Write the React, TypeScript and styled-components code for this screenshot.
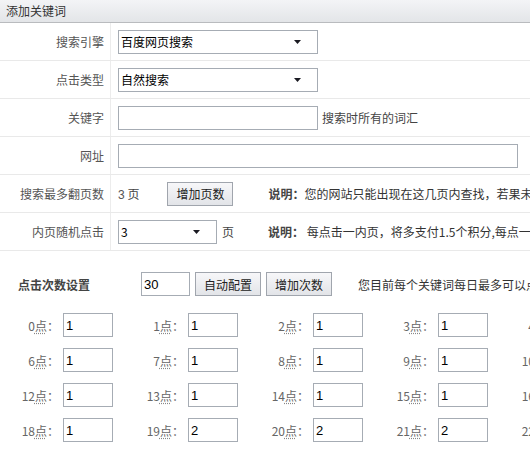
import React from 'react';
import styled, { createGlobalStyle } from 'styled-components';

const GlobalStyle = createGlobalStyle`
  html, body {
    margin: 0;
    padding: 0;
    background: #fff;
    overflow: hidden;
  }
  body {
    width: 530px;
    height: 450px;
    font-family: "Noto Sans CJK SC", "Liberation Sans", sans-serif;
    font-size: 12px;
    color: #333;
  }
`;

const hours = Array.from({ length: 24 }, (_, i) => ({
  hour: i,
  value: i >= 19 ? 2 : 1,
}));

const App = () => {
  return (
    <Page>
      <GlobalStyle />
      <TitleBar>添加关键词</TitleBar>
      <Form>
        <Row>
          <Label>搜索引擎</Label>
          <Field>
            <SelectBox width={200}>
              <span>百度网页搜索</span>
              <Arrow />
            </SelectBox>
          </Field>
        </Row>
        <Row>
          <Label>点击类型</Label>
          <Field>
            <SelectBox width={200}>
              <span>自然搜索</span>
              <Arrow />
            </SelectBox>
          </Field>
        </Row>
        <Row>
          <Label>关键字</Label>
          <Field>
            <TextInput width={200} defaultValue="" />
            <Hint>搜索时所有的词汇</Hint>
          </Field>
        </Row>
        <Row>
          <Label>网址</Label>
          <Field>
            <TextInput width={400} defaultValue="" />
          </Field>
        </Row>
        <Row>
          <Label>搜索最多翻页数</Label>
          <Field>
            <Plain><Num>3</Num> 页</Plain>
            <Button gap={28}>增加页数</Button>
            <Note gap={35}><b>说明：</b>您的网站只能出现在这几页内查找，若果未找到则不点击</Note>
          </Field>
        </Row>
        <Row>
          <Label>内页随机点击</Label>
          <Field>
            <SelectBox width={99}>
              <span>3</span>
              <Arrow />
            </SelectBox>
            <Plain gap={5}>页</Plain>
            <Note gap={34}><b>说明：</b> 每点击一内页，将多支付1.5个积分,每点一次</Note>
          </Field>
        </Row>
      </Form>
      <CountBar>
        <CountTitle>点击次数设置</CountTitle>
        <TextInput width={49} defaultValue="30" />
        <Button gap={5}>自动配置</Button>
        <Button gap={5}>增加次数</Button>
        <Note gap={26}>您目前每个关键词每日最多可以点击30次</Note>
      </CountBar>
      <HourGrid>
        {hours.map((h) => (
          <HourCell key={h.hour}>
            <HourLabel>
              {h.hour}<Dotted>点</Dotted>：
            </HourLabel>
            <TextInput width={50} defaultValue={String(h.value)} />
          </HourCell>
        ))}
      </HourGrid>
    </Page>
  );
};

export default App;

const Arrow = () => (
  <ArrowIcon width="8" height="4" viewBox="0 0 8 4">
    <path d="M0 0h7L3.5 4z" fill="#1a1a22" />
  </ArrowIcon>
);

const Page = styled.div`
  width: 530px;
  height: 450px;
  overflow: hidden;
`;

const TitleBar = styled.div`
  height: 22px;
  line-height: 22px;
  padding-left: 6px;
  background: linear-gradient(#f3f4f6, #e3e5e8);
  border-bottom: 1px solid #b9bbbe;
  color: #333;
  font-size: 12px;
`;

const Form = styled.div`
  display: flex;
  flex-direction: column;
`;

const Row = styled.div`
  display: flex;
  height: 37px;
  border-bottom: 1px solid #e9e9e9;
`;

const Label = styled.div`
  flex-shrink: 0;
  width: 104px;
  padding-right: 6px;
  border-right: 1px solid #ececec;
  display: flex;
  align-items: center;
  justify-content: flex-end;
  color: #555;
  font-size: 12px;
`;

const Field = styled.div`
  flex: 1;
  display: flex;
  align-items: center;
  padding-left: 7px;
  white-space: nowrap;
  min-width: 0;
  & > * {
    flex-shrink: 0;
  }
`;

const SelectBox = styled.div<{ width: number }>`
  position: relative;
  box-sizing: border-box;
  width: ${(p) => p.width}px;
  height: 24px;
  border: 1px solid #a6acb4;
  background: #fff;
  display: flex;
  align-items: center;
  padding-left: 2px;
  color: #000;
  font-size: 12px;
`;

const ArrowIcon = styled.svg`
  position: absolute;
  right: 15px;
  top: 9px;
`;

const TextInput = styled.input<{ width: number }>`
  flex-shrink: 0;
  box-sizing: border-box;
  width: ${(p) => p.width}px;
  height: 24px;
  border: 1px solid #a6acb4;
  padding: 0 2px;
  margin: 0;
  font-family: "Liberation Sans", "Noto Sans CJK SC", sans-serif;
  font-size: 13px;
  color: #000;
  outline: none;
`;

const Hint = styled.span`
  margin-left: 4px;
  color: #444;
`;

const Plain = styled.span<{ gap?: number }>`
  margin-left: ${(p) => p.gap || 0}px;
  color: #444;
`;

const Num = styled.span`
  font-family: "Liberation Sans", sans-serif;
  color: #555;
`;

const Button = styled.button<{ gap?: number }>`
  flex-shrink: 0;
  box-sizing: border-box;
  height: 24px;
  width: 66px;
  margin: 0 0 0 ${(p) => p.gap || 0}px;
  padding: 0;
  border: 1px solid #a0a5ad;
  background: linear-gradient(#f7f7f9, #e2e4e8);
  font-family: "Noto Sans CJK SC", sans-serif;
  font-size: 12px;
  color: #222;
`;

const Note = styled.span<{ gap?: number }>`
  flex-shrink: 0;
  margin-left: ${(p) => p.gap || 0}px;
  color: #333;
  white-space: nowrap;
  b {
    color: #444;
  }
`;

const CountBar = styled.div`
  display: flex;
  align-items: center;
  margin-top: 21px;
  padding-left: 18px;
  white-space: nowrap;
`;

const CountTitle = styled.span`
  flex-shrink: 0;
  width: 123px;
  font-weight: bold;
  font-size: 12px;
  color: #444;
`;

const HourGrid = styled.div`
  display: grid;
  grid-template-columns: repeat(6, 125px);
  row-gap: 11px;
  margin-top: 17px;
  width: 750px;
`;

const HourCell = styled.div`
  display: flex;
  align-items: center;
`;

const HourLabel = styled.span`
  width: 59px;
  padding-right: 4px;
  text-align: right;
  color: #666;
  font-size: 12px;
`;

const Dotted = styled.span`
  text-decoration: underline dotted #888;
  text-underline-offset: 2px;
`;
